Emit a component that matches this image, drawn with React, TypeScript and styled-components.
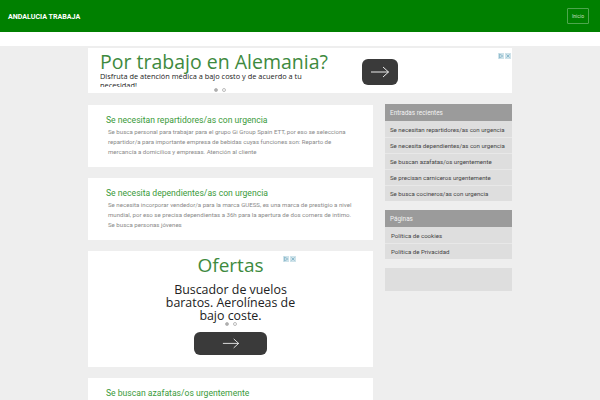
import React from "react";
import styled, { createGlobalStyle } from "styled-components";

const Global = createGlobalStyle`
  html, body { margin: 0; padding: 0; background: #eeeeee; }
  body { font-family: Roboto, "Liberation Sans", Arial, sans-serif; }
  * { box-sizing: border-box; }
`;

const Header = styled.header`
  height: 32px;
  background: #008000;
  display: flex;
  align-items: center;
  justify-content: space-between;
  padding: 0 11px 0 8px;
`;

const Brand = styled.div`
  color: #ffffff;
  font-weight: 700;
  font-size: 7.1px;
`;

const NavButton = styled.div`
  border: 1px solid rgba(255, 255, 255, 0.3);
  color: rgba(255, 255, 255, 0.75);
  font-size: 5px;
  height: 16px;
  width: 22px;
  display: flex;
  align-items: center;
  justify-content: center;
  border-radius: 1px;
`;

const WhiteStrip = styled.div`
  height: 14px;
  background: #ffffff;
`;

const Page = styled.div`
  width: 424px;
  margin: 0 auto;
  padding-top: 2px;
`;

const TopAd = styled.div`
  position: relative;
  background: #ffffff;
  height: 45px;
  display: flex;
  align-items: flex-start;
  padding: 0 0 0 12px;
`;

const AdText = styled.div`
  width: 240px;
  height: 39px;
  overflow: hidden;
  display: flex;
  flex-direction: column;
  padding-top: 4px;
  font-family: "Open Sans", "DejaVu Sans", sans-serif;
`;

const AdTitle = styled.div<{ $size: number }>`
  color: #3e8a3e;
  font-family: "Open Sans", "DejaVu Sans", sans-serif;
  font-size: ${(p) => p.$size}px;
  line-height: 1.05;
  white-space: nowrap;
`;

const AdSub = styled.div`
  color: #222;
  font-size: 7.4px;
  line-height: 9px;
`;

const TopDots = styled.div`
  position: absolute;
  left: 12px;
  width: 240px;
  bottom: 1px;
  display: flex;
  gap: 4px;
  justify-content: center;
`;

const Dots = styled.div`
  display: flex;
  gap: 4px;
  justify-content: center;
`;

const Dot = styled.span<{ $on?: boolean }>`
  width: 4px;
  height: 4px;
  border-radius: 50%;
  background: ${(p) => (p.$on ? "#aaaaaa" : "#ffffff")};
  border: 1px solid #bbbbbb;
`;

const ArrowButton = styled.div<{ $w: number; $h: number }>`
  width: ${(p) => p.$w}px;
  height: ${(p) => p.$h}px;
  background: #3a3a3a;
  border-radius: 6px;
  display: flex;
  align-items: center;
  justify-content: center;
`;

const TopAdButtonWrap = styled.div`
  margin-left: 22px;
  margin-top: 11px;
`;

const AdChoices = styled.div<{ $right: number; $top: number }>`
  position: absolute;
  right: ${(p) => p.$right}px;
  top: ${(p) => p.$top}px;
  display: flex;
  gap: 1px;
`;

const Layout = styled.div`
  display: flex;
  gap: 12px;
  margin-top: 12px;
  align-items: flex-start;
`;

const Main = styled.main`
  width: 285px;
  display: flex;
  flex-direction: column;
  gap: 11px;
`;

const Card = styled.article`
  background: #ffffff;
  padding: 9px 16px 8px 18px;
  min-height: 62px;
`;

const CardTitle = styled.h2`
  margin: 0;
  color: #3a9a3a;
  font-size: 8.6px;
  font-weight: 400;
  line-height: 12px;
`;

const CardBody = styled.p`
  margin: 1px 0 0 2px;
  color: #8a8a8a;
  font-size: 6.1px;
  line-height: 10px;
`;

const MidAd = styled.div`
  position: relative;
  background: #ffffff;
  height: 116px;
  display: flex;
  flex-direction: column;
  align-items: center;
  padding-top: 5px;
  font-family: "Open Sans", "DejaVu Sans", sans-serif;
`;

const MidText = styled.div`
  color: #222;
  font-size: 12.4px;
  line-height: 13px;
  text-align: center;
  width: 140px;
  margin-top: 7px;
  margin-bottom: 0;
`;

const MidButtonWrap = styled.div`
  margin-top: 6px;
`;

const Sidebar = styled.aside`
  width: 127px;
  display: flex;
  flex-direction: column;
  gap: 9px;
  margin-top: -1px;
`;

const Widget = styled.section`
  background: #dedede;
`;

const WidgetHead = styled.div`
  background: #9b9b9b;
  color: #f2f2f2;
  font-size: 6.4px;
  height: 17px;
  display: flex;
  align-items: center;
  padding-left: 5px;
`;

const WidgetItem = styled.div<{ $pad: number }>`
  height: 16px;
  display: flex;
  align-items: center;
  padding-left: ${(p) => p.$pad}px;
  font-size: 6.1px;
  color: #444;
  border-top: 1px solid #e8e8e8;
  white-space: nowrap;
  &:nth-child(2) { border-top: none; }
`;

const EmptyWidget = styled.div`
  background: #dedede;
  height: 23px;
`;

const Arrow = ({ w }: { w: number }) => (
  <svg width={w} height={w * 0.6} viewBox="0 0 20 12" fill="none">
    <path d="M1 6 H18.5 M13 1 L18.5 6 L13 11" stroke="#fff" strokeWidth="0.9" />
  </svg>
);

const Choices = () => (
  <>
    <svg width="6" height="6" viewBox="0 0 6 6">
      <rect width="6" height="6" fill="#cfe3ea" />
      <path d="M1.5 1 L4.8 3 L1.5 5 Z" fill="none" stroke="#6fa8c0" strokeWidth="0.6" />
    </svg>
    <svg width="6" height="6" viewBox="0 0 6 6">
      <rect width="6" height="6" fill="#cfe3ea" />
      <path d="M1.5 1.5 L4.5 4.5 M4.5 1.5 L1.5 4.5" stroke="#6fa8c0" strokeWidth="0.7" />
    </svg>
  </>
);

const recent = [
  "Se necesitan repartidores/as con urgencia",
  "Se necesita dependientes/as con urgencia",
  "Se buscan azafatas/os urgentemente",
  "Se precisan carniceros urgentemente",
  "Se busca cocineros/as con urgencia",
];

const posts = [
  {
    title: "Se necesitan repartidores/as con urgencia",
    body: "Se busca personal para trabajar para el grupo Gi Group Spain ETT, por eso se selecciona repartidor/a para importante empresa de bebidas cuyas funciones son: Reparto de mercancía a domicilios y empresas. Atención al cliente",
  },
  {
    title: "Se necesita dependientes/as con urgencia",
    body: "Se necesita incorporar vendedor/a para la marca GUESS, es una marca de prestigio a nivel mundial, por eso se precisa dependientas a 36h para la apertura de dos corners de intimo. Se busca personas jóvenes",
  },
];

export default function App() {
  return (
    <>
      <Global />
      <Header>
        <Brand>ANDALUCIA TRABAJA</Brand>
        <NavButton>Inicio</NavButton>
      </Header>
      <WhiteStrip />
      <Page>
        <TopAd>
          <AdText>
            <AdTitle $size={19.5}>Por trabajo en Alemania?</AdTitle>
            <AdSub>Disfruta de atención médica a bajo costo y de acuerdo a tu necesidad!</AdSub>
          </AdText>
          <TopDots>
            <Dot $on />
            <Dot />
          </TopDots>
          <TopAdButtonWrap>
            <ArrowButton $w={36} $h={26}>
              <Arrow w={20} />
            </ArrowButton>
          </TopAdButtonWrap>
          <AdChoices $right={1} $top={5}>
            <Choices />
          </AdChoices>
        </TopAd>
        <Layout>
          <Main>
            {posts.map((p) => (
              <Card key={p.title}>
                <CardTitle>{p.title}</CardTitle>
                <CardBody>{p.body}</CardBody>
              </Card>
            ))}
            <MidAd>
              <AdTitle $size={19}>Ofertas</AdTitle>
              <MidText>Buscador de vuelos baratos. Aerolíneas de bajo coste.</MidText>
              <Dots>
                <Dot $on />
                <Dot />
              </Dots>
              <MidButtonWrap>
                <ArrowButton $w={73} $h={23}>
                  <Arrow w={18} />
                </ArrowButton>
              </MidButtonWrap>
              <AdChoices $right={77} $top={5}>
                <Choices />
              </AdChoices>
            </MidAd>
            <Card>
              <CardTitle>Se buscan azafatas/os urgentemente</CardTitle>
              <CardBody>Se buscan azafatas/os para trabajar en eventos y promociones.</CardBody>
            </Card>
          </Main>
          <Sidebar>
            <Widget>
              <WidgetHead>Entradas recientes</WidgetHead>
              {recent.map((r) => (
                <WidgetItem key={r} $pad={5}>{r}</WidgetItem>
              ))}
            </Widget>
            <Widget>
              <WidgetHead>Páginas</WidgetHead>
              <WidgetItem $pad={6}>Política de cookies</WidgetItem>
              <WidgetItem $pad={6}>Política de Privacidad</WidgetItem>
            </Widget>
            <EmptyWidget />
          </Sidebar>
        </Layout>
      </Page>
    </>
  );
}
